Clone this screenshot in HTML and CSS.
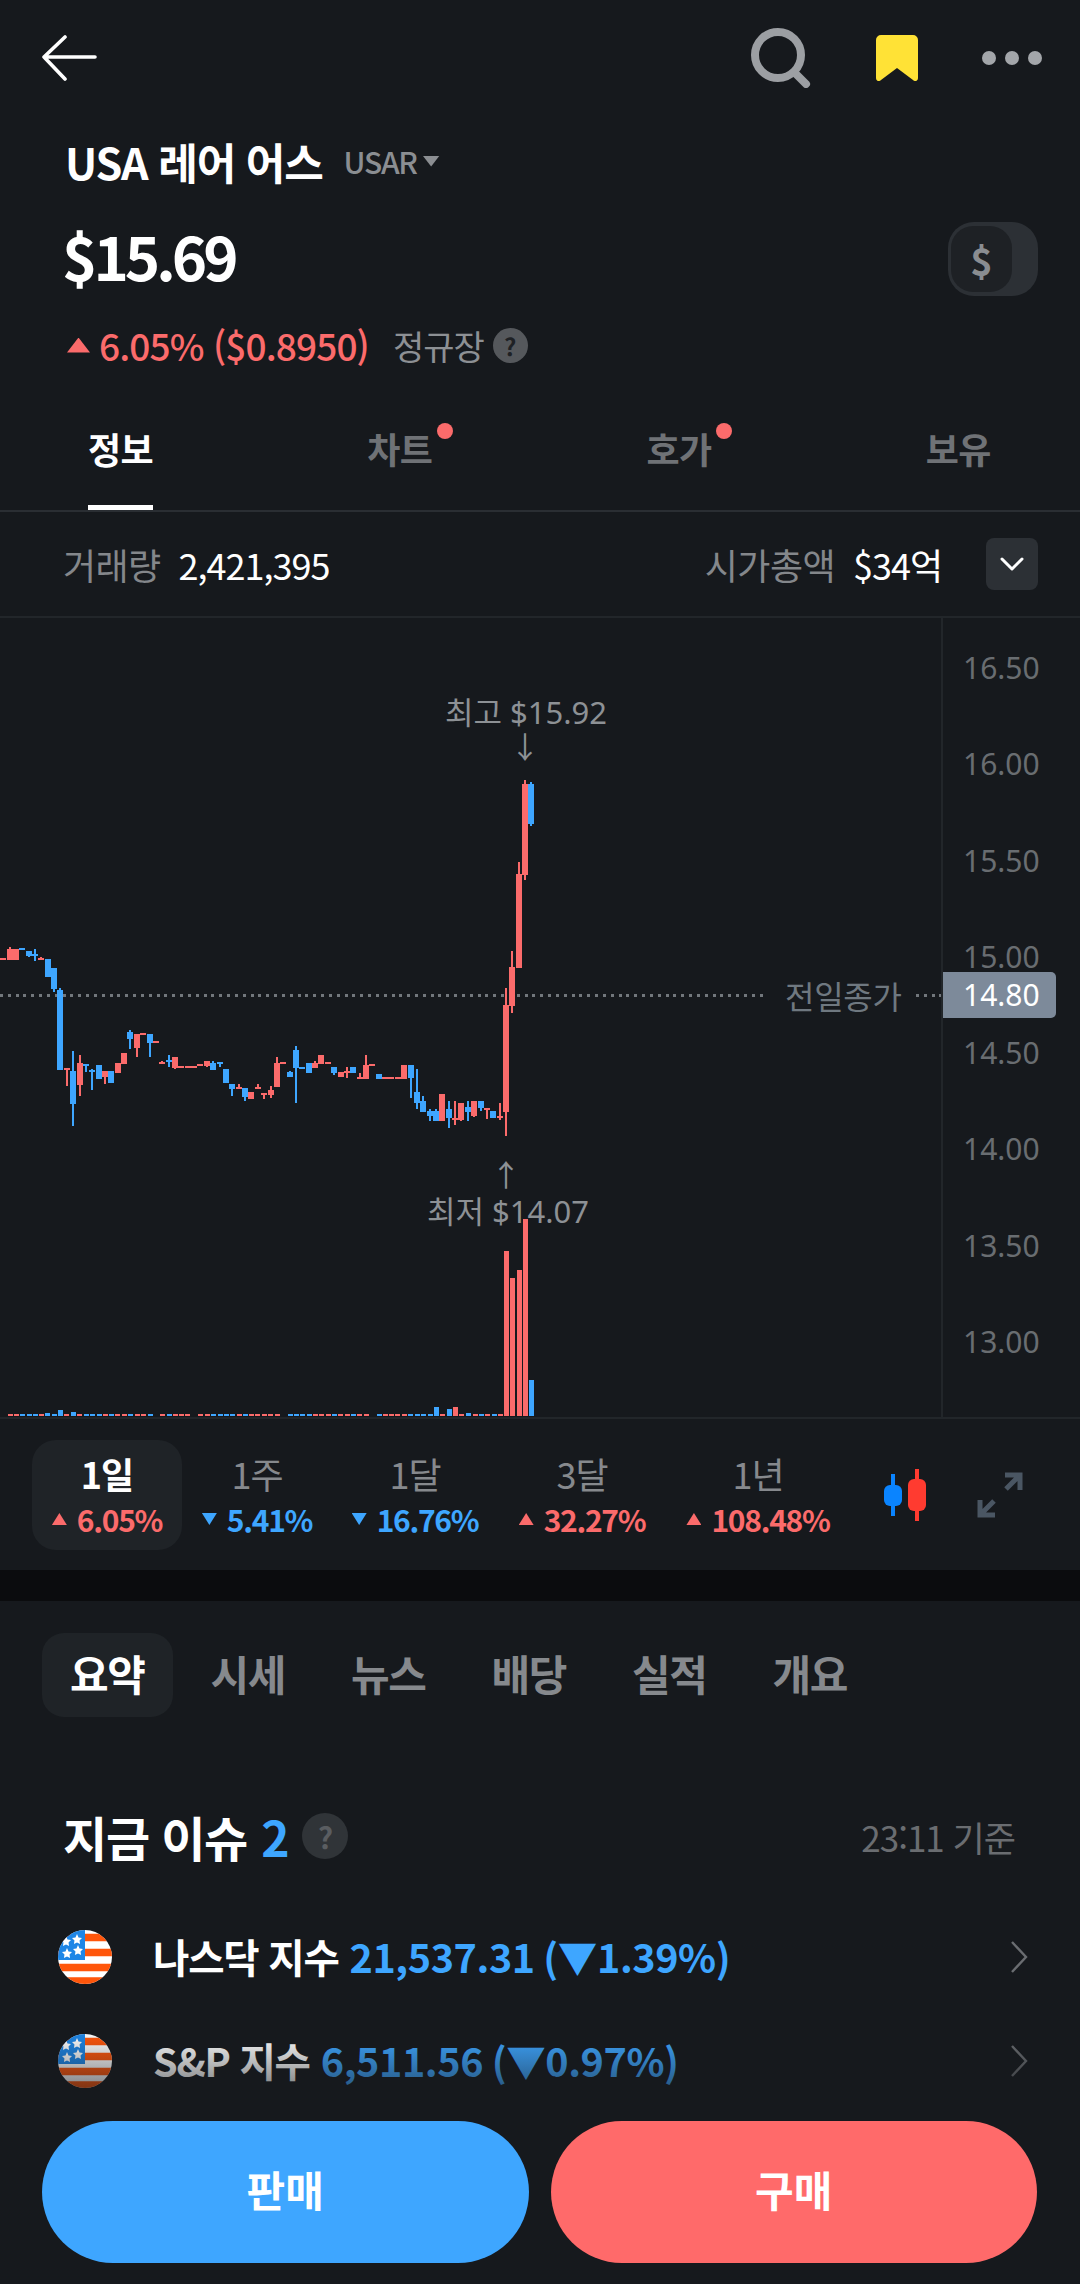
FILE: index.html
```html
<!DOCTYPE html>
<html lang="ko">
<head>
<meta charset="utf-8">
<title>USA 레어 어스</title>
<link rel="stylesheet" href="styles.css">
</head>
<body>
<main class="app">
  <header class="topbar">
    <svg class="back" viewBox="0 0 56 46"><path d="M54 22H3M24 2 3 22l21 22"/></svg>
    <div class="top-actions">
      <svg class="search" viewBox="0 0 60 60"><circle cx="27" cy="27" r="23"/><path d="M44 45 55 56"/></svg>
      <svg class="bookmark" viewBox="0 0 42 46"><path d="M5 0h32a5 5 0 0 1 5 5v38c0 3-3 4-5 2L21 33 5 45c-2 2-5 1-5-2V5a5 5 0 0 1 5-5z"/></svg>
      <svg class="more" viewBox="0 0 60 14"><circle cx="7" cy="7" r="7"/><circle cx="30" cy="7" r="7"/><circle cx="53" cy="7" r="7"/></svg>
    </div>
  </header>

  <section class="title-row">
    <h1 class="name">USA 레어 어스</h1>
    <span class="ticker">USAR</span>
    <span class="caret"></span>
  </section>

  <section class="price-row">
    <div class="price">$15.69</div>
    <div class="toggle"><span class="toggle-knob">$</span></div>
  </section>

  <section class="change-row">
    <span class="tri up big"></span>
    <span class="change">6.05% ($0.8950)</span>
    <span class="session">정규장</span>
    <span class="help">?</span>
  </section>

  <nav class="tabs">
    <a class="tab active">정보</a>
    <a class="tab dotted">차트</a>
    <a class="tab dotted">호가</a>
    <a class="tab">보유</a>
  </nav>

  <section class="info-row">
    <span class="info-label">거래량</span>
    <span class="info-value">2,421,395</span>
    <span class="info-label push">시가총액</span>
    <span class="info-value">$34억</span>
    <span class="info-toggle"><svg viewBox="0 0 24 14"><path d="M2 2l10 10L22 2"/></svg></span>
  </section>

  <section class="chart">
    <div class="plot">
      <svg class="plot-svg" viewBox="0 618 941 800">
        <path class="dots" d="M0 995H767M916 995H941"/>
        <path class="r w" d="M10 947V950M41 957V960M67 1068V1086M80 1055V1096M105 1071V1084M137 1034V1057M162 1061V1063M175 1057V1069M207 1061V1067M239 1084V1088M258 1084V1088M264 1093V1099M271 1086V1098M277 1057V1064M315 1061V1064M347 1067V1078M360 1073V1078M366 1055V1066M455 1101V1125M461 1103V1121M474 1101V1117M487 1108V1119M500 1103V1120M506 988V1136M512 951V1013M519 862V875M525 780V880"/>
        <path class="r b" d="M3 958V960M10 949V960M16 949V960M41 958V960M67 1068V1070M80 1063V1085M105 1071V1077M118 1063V1073M124 1053V1064M137 1034V1048M143 1033V1035M156 1041V1043M162 1062V1064M175 1057V1068M181 1066V1068M188 1066V1068M194 1066V1068M200 1064V1066M207 1061V1066M239 1087V1089M251 1092V1099M258 1087V1089M264 1093V1095M271 1090V1095M277 1063V1087M283 1062V1064M315 1063V1068M321 1055V1064M328 1062V1064M341 1072V1077M347 1071V1073M360 1077V1079M366 1065V1079M372 1064V1066M385 1077V1079M391 1077V1079M398 1077V1079M404 1065V1079M442 1094V1121M455 1118V1120M461 1103V1120M474 1101V1116M487 1108V1110M500 1116V1118M506 1005V1112M512 967V1006M519 874V968M525 784V875"/>
        <path class="l w" d="M29 956V957M35 949V961M54 988V992M60 988V991M73 1051V1126M86 1066V1072M92 1069V1090M130 1030V1049M150 1043V1057M169 1055V1067M213 1061V1064M220 1064V1067M232 1089V1096M245 1097V1101M290 1071V1073M296 1046V1103M334 1073V1075M411 1078V1098M417 1069V1109M423 1096V1102M430 1109V1121M436 1109V1112M449 1101V1128M468 1101V1121M481 1108V1111M531 782V826"/>
        <path class="l b" d="M22 948V950M29 951V956M35 954V956M48 959V977M54 968V989M60 990V1070M73 1071V1104M86 1064V1066M92 1070V1072M99 1065V1079M111 1071V1083M130 1032V1039M150 1034V1043M169 1060V1062M213 1063V1070M220 1062V1064M226 1069V1083M232 1084V1089M245 1088V1097M290 1072V1077M296 1050V1068M302 1067V1069M309 1063V1073M334 1067V1073M353 1067V1073M379 1074V1079M411 1065V1078M417 1092V1103M423 1101V1112M430 1111V1116M436 1111V1121M449 1109V1118M468 1107V1112M481 1101V1108M493 1111V1118M531 784V824"/>
        <path class="r v" d="M10 1414V1416M16 1414V1416M41 1414V1416M66 1414V1416M79 1414V1416M105 1414V1416M117 1414V1416M124 1414V1416M137 1414V1416M143 1414V1416M162 1414V1416M175 1414V1416M181 1414V1416M187 1414V1416M200 1414V1416M207 1414V1416M239 1414V1416M251 1414V1416M257 1414V1416M264 1414V1416M270 1414V1416M277 1414V1416M315 1414V1416M321 1414V1416M328 1414V1416M340 1414V1416M347 1414V1416M359 1414V1416M366 1414V1416M385 1414V1416M391 1414V1416M397 1414V1416M404 1414V1416M442 1414V1416M455 1407V1416M461 1414V1416M475 1414V1416M487 1414V1416M500 1414V1416M506 1251V1416M512 1278V1416M519 1270V1416M525 1219V1416"/>
        <path class="l v" d="M22 1414V1416M29 1414V1416M35 1414V1416M47 1413V1416M54 1414V1416M60 1410V1416M73 1412V1416M86 1414V1416M92 1414V1416M99 1414V1416M111 1414V1416M130 1414V1416M150 1414V1416M169 1414V1416M213 1414V1416M220 1414V1416M226 1414V1416M232 1414V1416M245 1414V1416M290 1414V1416M296 1414V1416M302 1414V1416M309 1414V1416M334 1414V1416M353 1414V1416M379 1414V1416M410 1414V1416M417 1414V1416M423 1414V1416M430 1414V1416M436 1407V1416M449 1409V1416M468 1413V1416M481 1414V1416M494 1414V1416M531 1380V1416"/>
      </svg>
      <span class="note note-high">최고 $15.92</span>
      <span class="note arrow arrow-down">↓</span>
      <span class="note arrow arrow-up">↑</span>
      <span class="note note-low">최저 $14.07</span>
      <span class="prev-close">전일종가</span>
    </div>
    <div class="axis">
      <span>16.50</span><span>16.00</span><span>15.50</span><span>15.00</span><span>14.50</span><span>14.00</span><span>13.50</span><span>13.00</span>
      <b class="axis-tag">14.80</b>
    </div>
  </section>

  <section class="periods">
    <div class="period selected"><span class="p-name">1일</span><span class="p-val red"><i class="tri up"></i>6.05%</span></div>
    <div class="period"><span class="p-name">1주</span><span class="p-val blue"><i class="tri down"></i>5.41%</span></div>
    <div class="period"><span class="p-name">1달</span><span class="p-val blue"><i class="tri down"></i>16.76%</span></div>
    <div class="period"><span class="p-name">3달</span><span class="p-val red"><i class="tri up"></i>32.27%</span></div>
    <div class="period"><span class="p-name">1년</span><span class="p-val red"><i class="tri up"></i>108.48%</span></div>
    <svg class="candle-icon" viewBox="0 0 42 52"><path class="ci-b" d="M9 5v42"/><rect class="ci-bf" y="16" width="18" height="21" rx="6"/><path class="ci-r" d="M33 0v52"/><rect class="ci-rf" x="24" y="10" width="18" height="32" rx="6"/></svg>
    <svg class="expand-icon" viewBox="0 0 46 46"><path d="M28 3h15v15M43 3 29 17M18 43H3V28M3 43l14-14"/></svg>
  </section>

  <div class="strip"></div>

  <nav class="subtabs">
    <a class="subtab active">요약</a>
    <a class="subtab">시세</a>
    <a class="subtab">뉴스</a>
    <a class="subtab">배당</a>
    <a class="subtab">실적</a>
    <a class="subtab">개요</a>
  </nav>

  <section class="issues">
    <div class="issues-head">
      <h2 class="issues-title">지금 이슈 <em>2</em></h2>
      <span class="help large">?</span>
      <span class="asof">23:11 기준</span>
    </div>
    <div class="issue">
      <svg class="flag" viewBox="0 0 54 54"><defs><clipPath id="fc"><circle cx="27" cy="27" r="27"/></clipPath></defs><g clip-path="url(#fc)"><rect width="54" height="54" fill="#fff"/><path class="fs" d="M0 7.500H54M0 22.500H54M0 37.500H54M0 51H54"/><rect width="27" height="30" fill="#1e86e6"/><g class="stars"><path d="M8 6l1.500 3.500 3.500.5-2.500 2.500.6 3.500L8 14.500 4.900 16l.6-3.500L3 10l3.500-.5zM19 4l1.500 3.500 3.500.5-2.500 2.500.6 3.500L19 12.500 15.900 14l.6-3.500L14 8l3.500-.5zM20 15l1.500 3.500 3.500.5-2.500 2.500.6 3.500L20 23.500 16.900 25l.6-3.500L15 19l3.500-.5zM9 18l1.500 3.500 3.500.5-2.500 2.500.6 3.500L9 26.500 5.900 28l.6-3.500L4 22l3.500-.5z"/></g></g></svg>
      <span class="issue-name">나스닥 지수</span>
      <span class="issue-val">21,537.31 (▼1.39%)</span>
      <svg class="chev" viewBox="0 0 18 34"><path d="M2 2l14 15L2 32"/></svg>
    </div>
    <div class="issue">
      <svg class="flag" viewBox="0 0 54 54"><g clip-path="url(#fc)"><rect width="54" height="54" fill="#fff"/><path class="fs" d="M0 7.500H54M0 22.500H54M0 37.500H54M0 51H54"/><rect width="27" height="30" fill="#1e86e6"/><g class="stars"><path d="M8 6l1.500 3.500 3.500.5-2.500 2.500.6 3.500L8 14.500 4.900 16l.6-3.500L3 10l3.500-.5zM19 4l1.500 3.500 3.500.5-2.500 2.500.6 3.500L19 12.500 15.900 14l.6-3.500L14 8l3.500-.5zM20 15l1.500 3.500 3.500.5-2.500 2.500.6 3.500L20 23.500 16.900 25l.6-3.500L15 19l3.500-.5zM9 18l1.500 3.500 3.500.5-2.500 2.500.6 3.500L9 26.500 5.900 28l.6-3.500L4 22l3.500-.5z"/></g></g></svg>
      <span class="issue-name">S&amp;P 지수</span>
      <span class="issue-val">6,511.56 (▼0.97%)</span>
      <svg class="chev" viewBox="0 0 18 34"><path d="M2 2l14 15L2 32"/></svg>
    </div>
  </section>

  <footer class="actions">
    <button class="action sell">판매</button>
    <button class="action buy">구매</button>
  </footer>
</main>
</body>
</html>
```

FILE: styles.css
```css
* { box-sizing: border-box; }
html, body { margin: 0; padding: 0; background: #16191d; }
body { font-family: "Noto Sans CJK KR", "Noto Sans", sans-serif; color: #fff; }
h1, h2 { margin: 0; font-weight: 700; }

.app { position: relative; width: 1080px; height: 2284px; overflow: hidden; background: #16191d; display: flex; flex-direction: column; }

/* header */
.topbar { height: 116px; display: flex; align-items: center; justify-content: space-between; padding: 0 38px 0 41px; flex: none; }
.back { width: 56px; height: 46px; fill: none; stroke: #fff; stroke-width: 3.6; stroke-linecap: round; stroke-linejoin: round; }
.top-actions { display: flex; align-items: center; }
.search { width: 60px; height: 60px; fill: none; stroke: #9c9fa3; stroke-width: 8; stroke-linecap: round; margin-right: 65px; }
.bookmark { width: 42px; height: 46px; fill: #ffe236; margin-right: 64px; }
.more { width: 60px; height: 14px; fill: #a3a6aa; }

.title-row { height: 92px; padding: 0 0 2px 65px; display: flex; align-items: center; flex: none; }
.name { font-size: 43px; line-height: 1; letter-spacing: -1.2px; }
.ticker { font-size: 30px; color: #8b8e92; font-weight: 500; margin-left: 21px; letter-spacing: -1.3px; }
.caret { width: 17px; height: 11px; background: #8b8e92; clip-path: polygon(0 0, 100% 0, 50% 100%); margin-left: 6px; }

.price-row { height: 102px; padding: 0 42px 0 62px; display: flex; align-items: center; justify-content: space-between; flex: none; }
.price { font-size: 60px; font-weight: 700; line-height: 1; letter-spacing: -4px; margin-bottom: 9px; }
.toggle { width: 90px; height: 74px; border-radius: 26px; background: #2c3035; padding: 4px 26px 4px 3px; }
.toggle-knob { display: flex; align-items: center; justify-content: center; height: 100%; border-radius: 22px; background: #1e2125; color: #8a8d91; font-size: 38px; font-weight: 700; }

.change-row { height: 70px; padding-left: 67px; display: flex; align-items: center; flex: none; }
.tri { display: inline-block; flex: none; }
.tri.up { clip-path: polygon(50% 0, 100% 100%, 0 100%); background: #fb6b6b; }
.tri.down { clip-path: polygon(0 0, 100% 0, 50% 100%); background: #3ea6ff; }
.tri.big { width: 23px; height: 15px; margin-right: 9px; }
.change { font-size: 37px; font-weight: 500; color: #fb6b6b; letter-spacing: -.9px; }
.session { font-size: 34px; color: #8d9094; margin-left: 24px; letter-spacing: -1px; }
.help { width: 35px; height: 35px; border-radius: 50%; background: #55585c; color: #1e2125; font-size: 24px; font-weight: 700; display: flex; align-items: center; justify-content: center; margin-left: 9px; }

.tabs { height: 132px; padding: 6px 89px 0 88px; display: flex; align-items: center; justify-content: space-between; border-bottom: 2px solid #2a2e33; flex: none; }
.tab { position: relative; font-size: 36px; font-weight: 700; color: #6f7276; line-height: 60px; letter-spacing: -.5px; }
.tab.active { color: #fff; }
.tab.active::after { content: ""; position: absolute; left: 0; right: 0; bottom: -32px; height: 5px; background: #fff; }
.tab.dotted::after { content: ""; position: absolute; right: -20px; top: 5px; width: 16px; height: 16px; border-radius: 50%; background: #fb6b6b; }

.info-row { height: 106px; padding: 0 42px 0 63px; display: flex; align-items: center; border-bottom: 2px solid #22262a; flex: none; font-size: 36px; }
.info-label { color: #84878b; letter-spacing: -.6px; margin-right: 18px; }
.info-value { color: #fff; letter-spacing: -1px; }
.info-label.push { margin-left: auto; }
.info-toggle { width: 52px; height: 52px; border-radius: 8px; background: #2c3035; margin-left: 44px; display: flex; align-items: center; justify-content: center; }
.info-toggle svg { width: 24px; height: 14px; fill: none; stroke: #fff; stroke-width: 3; stroke-linecap: round; stroke-linejoin: round; }

/* chart */
.chart { height: 801px; display: flex; border-bottom: 2px solid #22262a; flex: none; }
.plot { position: relative; width: 941px; height: 799px; flex: none; overflow: hidden; }
.plot-svg { display: block; width: 941px; height: 800px; }
.plot-svg path { fill: none; shape-rendering: crispEdges; }
.plot-svg .r { stroke: #fb6b6b; }
.plot-svg .l { stroke: #3ea6ff; }
.plot-svg .w { stroke-width: 2; }
.plot-svg .b { stroke-width: 6; }
.plot-svg .v { stroke-width: 5; }
.plot-svg .dots { stroke: #72777c; stroke-width: 3; stroke-dasharray: 3 4.830; }
.note { position: absolute; font-family: "Noto Sans", "Noto Sans CJK KR", sans-serif; font-size: 31px; line-height: 40px; color: #8d9195; white-space: nowrap; }
.note-high { left: 445px; top: 74px; }
.note-low { left: 427px; top: 573px; }
.arrow { font-family: "Noto Sans CJK KR", sans-serif; font-size: 30px; line-height: 30px; }
.arrow-down { left: 510px; top: 112px; }
.arrow-up { left: 491px; top: 540px; }
.prev-close { position: absolute; left: 785px; top: 357px; font-size: 32px; line-height: 40px; letter-spacing: -.3px; color: #6f7880; }

.axis { position: relative; flex: 1; border-left: 2px solid #22262a; display: flex; flex-direction: column; padding: 28px 0 0 20px; font-family: "Noto Sans", sans-serif; font-size: 30px; color: #696d71; }
.axis span { height: 96.300px; line-height: 44px; }
.axis-tag { position: absolute; left: 0; top: 354px; width: 113px; height: 46px; border-radius: 0 5px 5px 0; background: #7d8a9a; color: #fff; font-weight: 400; line-height: 46px; padding-left: 20px; }

/* period bar */
.periods { height: 151px; display: flex; align-items: center; flex: none; padding: 0 0 0 32px; position: relative; }
.period { height: 110px; display: flex; flex-direction: column; align-items: center; justify-content: center; border-radius: 24px; }
.period:nth-child(1) { width: 150px; }
.period:nth-child(2) { width: 150px; }
.period:nth-child(3) { width: 166px; }
.period:nth-child(4) { width: 168px; }
.period:nth-child(5) { width: 184px; }
.period.selected { background: #1f2327; }
.p-name { font-size: 36px; color: #86898d; line-height: 46px; letter-spacing: -1px; }
.selected .p-name { color: #fff; font-weight: 700; }
.p-val { display: flex; align-items: center; font-size: 30px; font-weight: 700; line-height: 40px; letter-spacing: -1.300px; margin-top: 3px; }
.p-val .tri { width: 15px; height: 12px; margin-right: 10px; }
.red { color: #fb6b6b; }
.blue { color: #3ea6ff; }
.candle-icon { width: 42px; height: 52px; margin-left: 34px; }
.ci-b { stroke: #0a84ff; stroke-width: 4; }
.ci-bf { fill: #0a84ff; }
.ci-r { stroke: #ff3b30; stroke-width: 4; }
.ci-rf { fill: #ff3b30; }
.expand-icon { width: 46px; height: 46px; margin-left: 51px; fill: none; stroke: #4a5663; stroke-width: 5; }

.strip { height: 31px; background: #0b0c0e; flex: none; }

.subtabs { display: flex; gap: 10px; padding: 32px 0 0 42px; flex: none; }
.subtab { width: 130.500px; height: 84px; padding-bottom: 6px; border-radius: 22px; display: flex; align-items: center; justify-content: center; font-size: 42px; font-weight: 700; color: #86898d; letter-spacing: -1.500px; }
.subtab.active { background: #1f2327; color: #fff; }

.issues { padding: 0 52px 0 58px; flex: none; }
.issues-head { display: flex; align-items: center; height: 76px; margin-top: 81px; padding-left: 5px; }
.issues-title { font-size: 48px; line-height: 1; letter-spacing: -1.200px; font-weight: 700; }
.issues-title em { font-style: normal; color: #3ea6ff; margin-left: 2px; }
.help.large { width: 46px; height: 46px; font-size: 30px; background: #303438; color: #5a5d61; margin-left: 14px; }
.asof { margin-left: auto; font-size: 35px; color: #6a6d71; letter-spacing: -1px; margin-right: 13px; }

.issue { height: 104px; display: flex; align-items: center; }
.issues-head + .issue { margin-top: 31px; }
.flag { width: 54px; height: 54px; flex: none; margin-right: 41px; }
.fs { stroke: #ff560b; stroke-width: 7.500; fill: none; }
.stars { fill: #fff; }
.issue-name { font-size: 39.500px; font-weight: 700; letter-spacing: -1.200px; margin: -3px 11px 0 0; }
.issue-val { font-size: 39.500px; font-weight: 700; color: #3ea6ff; letter-spacing: -.4px; margin-top: -3px; }
.chev { width: 18px; height: 34px; margin-left: auto; fill: none; stroke: #6a6d71; stroke-width: 2.400; }

.actions { position: absolute; left: 0; right: 0; bottom: 0; height: 163px; padding: 0 43px 21px 42px; display: flex; gap: 22px; background: #16191d; }
.actions::before { content: ""; position: absolute; left: 0; right: 0; top: -90px; height: 90px; background: linear-gradient(to bottom, rgba(22,25,29,0), rgba(22,25,29,.85)); }
.action { flex: 1; border: 0; border-radius: 71px; padding-bottom: 8px; font-family: inherit; font-size: 42px; font-weight: 700; color: #fff; }
.sell { background: #3ea6ff; }
.buy { background: #ff6a6a; }
```
